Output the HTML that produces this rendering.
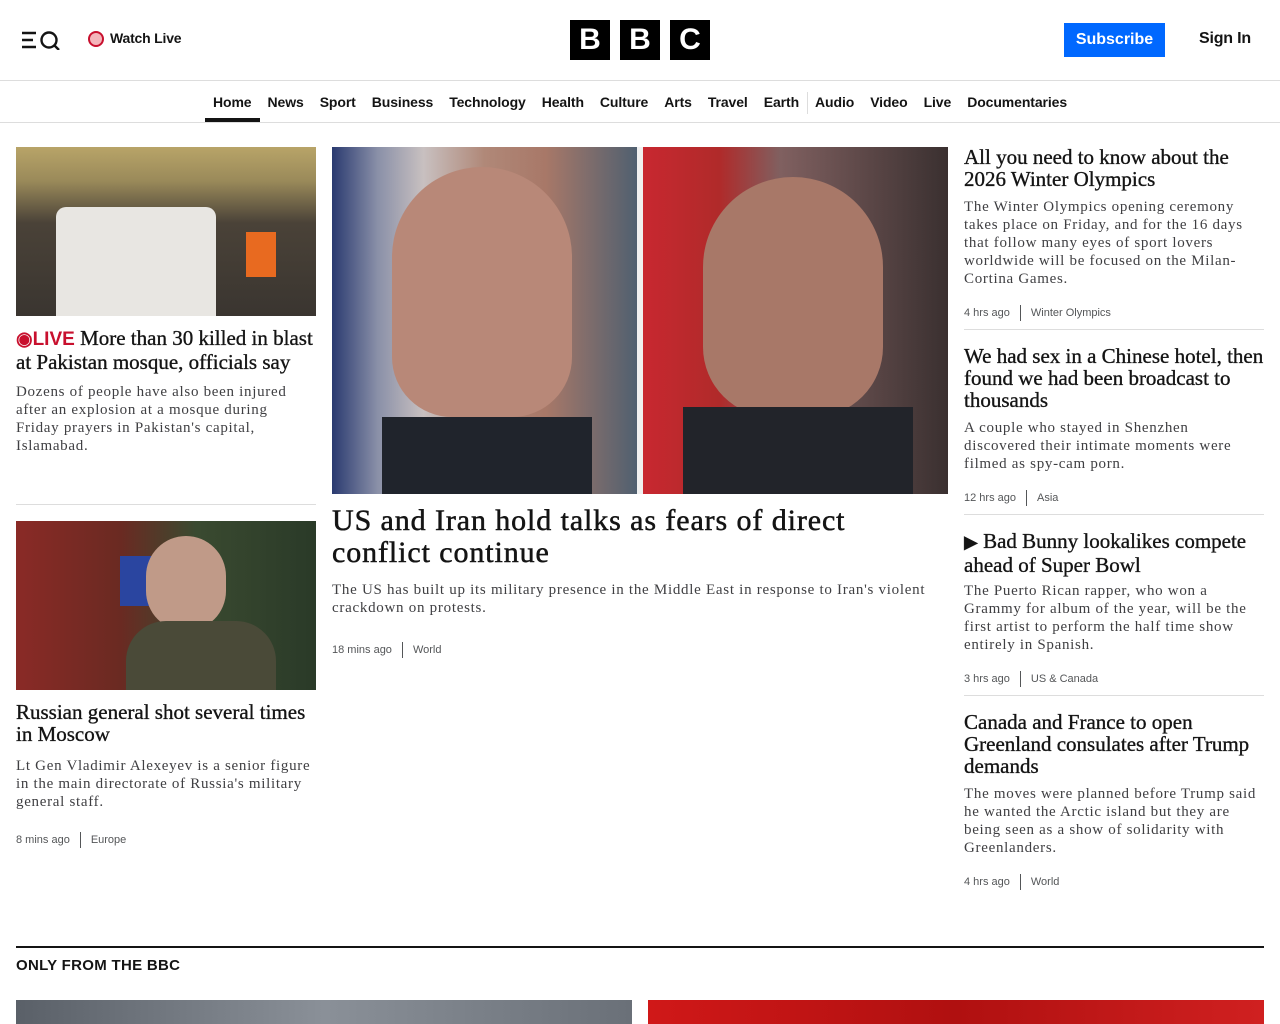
<!DOCTYPE html>
<html><head><meta charset="utf-8"><style>
*{margin:0;padding:0;box-sizing:border-box}
body{width:1280px;height:1024px;overflow:hidden;background:#fff;font-family:"Liberation Sans",sans-serif;color:#141414;position:relative}
.abs{position:absolute}
.serif{font-family:"Liberation Serif",serif}
h3{font-family:"Liberation Serif",serif;font-weight:normal;font-size:21px;line-height:22px;color:#141414;letter-spacing:0px;white-space:nowrap;-webkit-text-stroke:0.35px #141414}
p.d{font-family:"Liberation Serif",serif;font-size:15px;line-height:18px;color:#3f3f42;white-space:nowrap;letter-spacing:0.7px}
.meta{font-size:11px;color:#545658;display:flex;align-items:center}
.meta span.sep{display:inline-block;width:1px;height:16px;background:#545658;margin:0 10px}
.nav a{font-size:14px;font-weight:bold;color:#141414;text-decoration:none;margin-right:16px;letter-spacing:-0.1px}
.hr{height:1px;background:#ddd}
</style></head><body>
<svg class="abs" style="left:22px;top:30px" width="40" height="20" viewBox="0 0 40 20"><path d="M0 3h14M0 10h11M0 17h14" stroke="#141414" stroke-width="2.4"/><circle cx="27" cy="10" r="7.5" fill="none" stroke="#141414" stroke-width="2.4"/><path d="M32 15l5 5" stroke="#141414" stroke-width="2.4"/></svg>
<div class="abs" style="left:88px;top:31px;width:16px;height:16px;border-radius:50%;border:2px solid #c8102e;background:#f4b5bb"></div>
<div class="abs" style="left:110px;top:30px;font-size:14px;font-weight:bold;letter-spacing:-0.2px">Watch Live</div>
<div class="abs" style="left:570px;top:20px;display:flex;gap:10px">
<div style="width:40px;height:40px;background:#000;color:#fff;font-weight:bold;font-size:30px;text-align:center;line-height:40px">B</div>
<div style="width:40px;height:40px;background:#000;color:#fff;font-weight:bold;font-size:30px;text-align:center;line-height:40px">B</div>
<div style="width:40px;height:40px;background:#000;color:#fff;font-weight:bold;font-size:30px;text-align:center;line-height:40px">C</div></div>
<div class="abs" style="left:1064px;top:23px;width:101px;height:34px;background:#0068ff;color:#fff;font-size:16px;font-weight:bold;text-align:center;line-height:34px">Subscribe</div>
<div class="abs" style="left:1199px;top:30px;font-size:16px;font-weight:bold;letter-spacing:-0.2px">Sign In</div>
<div class="abs hr" style="left:0;top:80px;width:1280px"></div>
<div class="abs nav" style="left:213px;top:92px;white-space:nowrap"><a>Home</a><a>News</a><a>Sport</a><a>Business</a><a>Technology</a><a>Health</a><a>Culture</a><a>Arts</a><a>Travel</a><a style="margin-right:8px">Earth</a><span style="display:inline-block;width:1px;height:22px;background:#ddd;vertical-align:middle;margin-right:7px"></span><a>Audio</a><a>Video</a><a>Live</a><a>Documentaries</a></div>
<div class="abs" style="left:205px;top:118px;width:55px;height:4px;background:#141414"></div>
<div class="abs hr" style="left:0;top:122px;width:1280px"></div>

<div class="abs" style="left:16px;top:147px;width:300px;height:169px;background:linear-gradient(180deg,#b8a468 0,#9a8a5a 20%,#4a4238 45%,#3a3530 100%)"><div class="abs" style="left:40px;top:60px;width:160px;height:109px;background:#e8e6e2;border-radius:10px 10px 0 0"></div><div class="abs" style="left:230px;top:85px;width:30px;height:45px;background:#e86a20"></div></div>
<h3 class="abs" style="left:16px;top:327px"><span style="color:#c8102e;font-family:'Liberation Sans',sans-serif;font-weight:bold;font-size:19px;-webkit-text-stroke:0;letter-spacing:0">◉LIVE</span> More than 30 killed in blast<br>at Pakistan mosque, officials say</h3>
<p class="d abs" style="left:16px;top:383px">Dozens of people have also been injured<br>after an explosion at a mosque during<br>Friday prayers in Pakistan's capital,<br>Islamabad.</p>
<div class="abs hr" style="left:16px;top:504px;width:300px"></div>
<div class="abs" style="left:16px;top:521px;width:300px;height:169px;background:linear-gradient(90deg,#8a2a26 0,#6a2a22 35%,#3a4a30 60%,#2a3a28 100%)"><div class="abs" style="left:104px;top:35px;width:36px;height:50px;background:#2a45a0"></div><div class="abs" style="left:130px;top:15px;width:80px;height:95px;background:#c09a88;border-radius:40px"></div><div class="abs" style="left:110px;top:100px;width:150px;height:69px;background:#4a4a38;border-radius:40px 40px 0 0"></div></div>
<h3 class="abs" style="left:16px;top:701px">Russian general shot several times<br>in Moscow</h3>
<p class="d abs" style="left:16px;top:757px">Lt Gen Vladimir Alexeyev is a senior figure<br>in the main directorate of Russia's military<br>general staff.</p>
<div class="meta abs" style="left:16px;top:832px">8 mins ago<span class="sep"></span>Europe</div>

<div class="abs" style="left:332px;top:147px;width:305px;height:347px;background:linear-gradient(90deg,#2a3a70 0,#8a90a8 15%,#c8c0c0 30%,#b08878 50%,#a87868 70%,#506070 100%)"><div class="abs" style="left:60px;top:20px;width:180px;height:250px;background:#b88878;border-radius:90px 90px 60px 60px"></div><div class="abs" style="left:50px;top:270px;width:210px;height:77px;background:#20242c"></div></div>
<div class="abs" style="left:637px;top:147px;width:6px;height:347px;background:#f0f0f0"></div>
<div class="abs" style="left:643px;top:147px;width:305px;height:347px;background:linear-gradient(90deg,#c82830 0,#b02a2a 25%,#806060 45%,#3a3030 100%)"><div class="abs" style="left:60px;top:30px;width:180px;height:240px;background:#a87868;border-radius:90px 90px 70px 70px"></div><div class="abs" style="left:40px;top:260px;width:230px;height:87px;background:#22242a"></div></div>
<div class="abs serif" style="left:332px;top:505px;font-size:30px;line-height:32px;color:#141414;white-space:nowrap;letter-spacing:0.9px;-webkit-text-stroke:0.5px #141414">US and Iran hold talks as fears of direct<br>conflict continue</div>
<p class="d abs" style="left:332px;top:581px;letter-spacing:0.72px">The US has built up its military presence in the Middle East in response to Iran's violent<br>crackdown on protests.</p>
<div class="meta abs" style="left:332px;top:642px">18 mins ago<span class="sep"></span>World</div>

<h3 class="abs" style="left:964px;top:146px">All you need to know about the<br>2026 Winter Olympics</h3>
<p class="d abs" style="left:964px;top:198px">The Winter Olympics opening ceremony<br>takes place on Friday, and for the 16 days<br>that follow many eyes of sport lovers<br>worldwide will be focused on the Milan-<br>Cortina Games.</p>
<div class="meta abs" style="left:964px;top:305px">4 hrs ago<span class="sep"></span>Winter Olympics</div>
<div class="abs hr" style="left:964px;top:329px;width:300px"></div>
<h3 class="abs" style="left:964px;top:345px">We had sex in a Chinese hotel, then<br>found we had been broadcast to<br>thousands</h3>
<p class="d abs" style="left:964px;top:419px">A couple who stayed in Shenzhen<br>discovered their intimate moments were<br>filmed as spy-cam porn.</p>
<div class="meta abs" style="left:964px;top:490px">12 hrs ago<span class="sep"></span>Asia</div>
<div class="abs hr" style="left:964px;top:514px;width:300px"></div>
<h3 class="abs" style="left:964px;top:530px"><span style="font-family:'DejaVu Sans';font-size:18px">▶</span> Bad Bunny lookalikes compete<br>ahead of Super Bowl</h3>
<p class="d abs" style="left:964px;top:582px">The Puerto Rican rapper, who won a<br>Grammy for album of the year, will be the<br>first artist to perform the half time show<br>entirely in Spanish.</p>
<div class="meta abs" style="left:964px;top:671px">3 hrs ago<span class="sep"></span>US &amp; Canada</div>
<div class="abs hr" style="left:964px;top:695px;width:300px"></div>
<h3 class="abs" style="left:964px;top:711px">Canada and France to open<br>Greenland consulates after Trump<br>demands</h3>
<p class="d abs" style="left:964px;top:785px">The moves were planned before Trump said<br>he wanted the Arctic island but they are<br>being seen as a show of solidarity with<br>Greenlanders.</p>
<div class="meta abs" style="left:964px;top:874px">4 hrs ago<span class="sep"></span>World</div>

<div class="abs" style="left:16px;top:946px;width:1248px;height:2px;background:#141414"></div>
<div class="abs" style="left:16px;top:957px;font-size:15px;font-weight:bold;letter-spacing:0.3px">ONLY FROM THE BBC</div>
<div class="abs" style="left:16px;top:1000px;width:616px;height:24px;background:linear-gradient(90deg,#5a6068,#8a9098,#6a7078)"></div>
<div class="abs" style="left:648px;top:1000px;width:616px;height:24px;background:linear-gradient(90deg,#d01818,#b01010 50%,#d02020)"></div>
</body></html>
